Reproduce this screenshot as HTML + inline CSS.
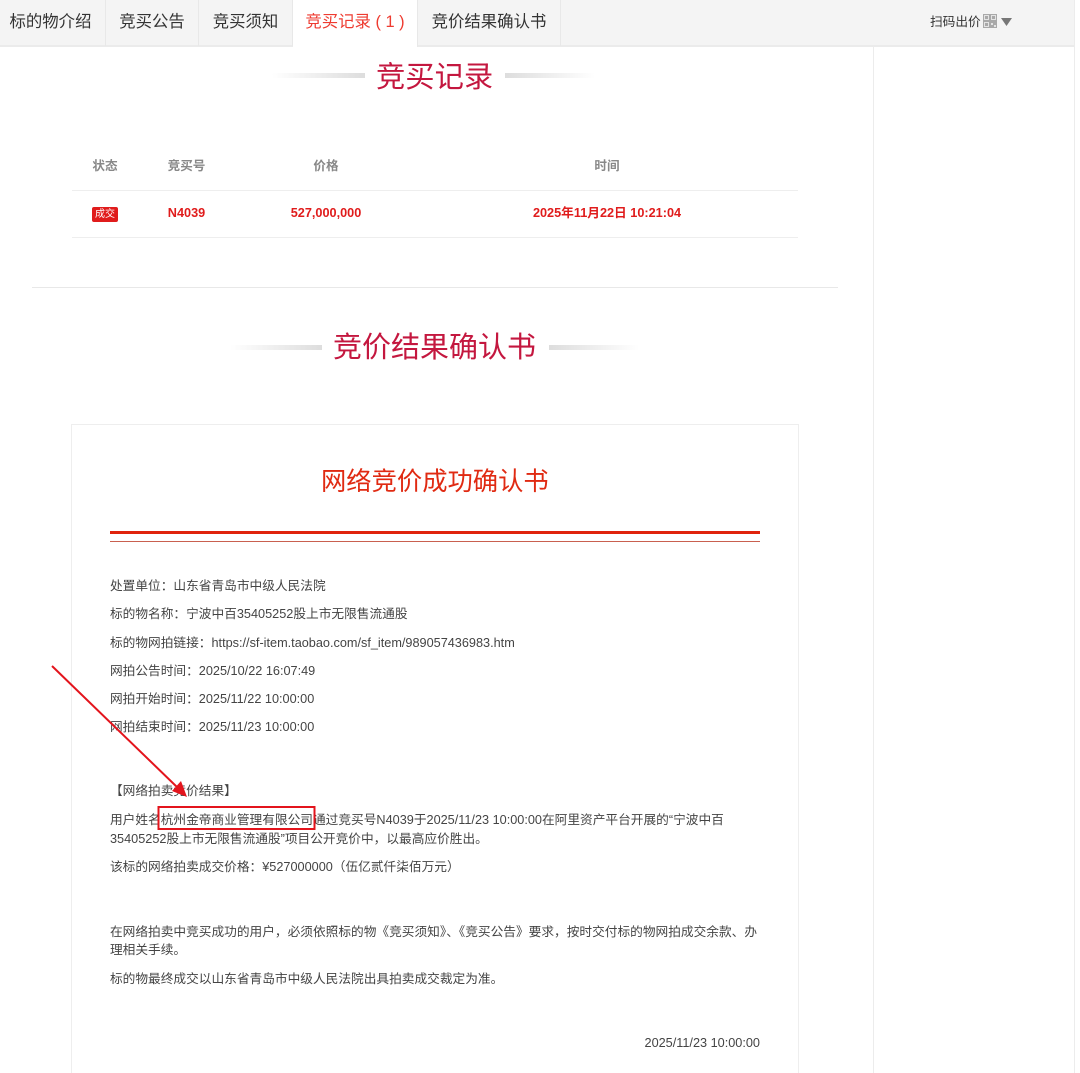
<!DOCTYPE html>
<html lang="zh-CN"><head><meta charset="utf-8"><title>竞买记录</title>
<style>
html,body{margin:0;padding:0;background:#fff;width:1080px;height:1073px;overflow:hidden}
#w{position:relative;width:1080px;height:1073px;overflow:hidden;font-family:"Liberation Sans","WenQuanYi Zen Hei","Noto Sans CJK SC",sans-serif}
.a{position:absolute;white-space:nowrap}
.r{position:absolute}
.tab{position:absolute;top:0;height:46px;line-height:45px;font-size:16.400px;color:#333;text-align:center;border-right:1px solid #e8e8e8;box-sizing:border-box}
.h{color:#c4173f;font-weight:400;line-height:40px}
.th{top:158px;font-size:12.600px;font-weight:700;color:#888;line-height:16px;transform:translateX(-50%)}
.td{top:205px;font-size:12.700px;font-weight:700;color:#e01c1c;line-height:16px;transform:translateX(-50%)}
.p{left:110px;font-size:12.700px;line-height:18px;color:#444}
</style></head><body><div id="w">
<div class="r" style="left:0;top:0;width:1075px;height:45px;background:#f4f4f4;border-bottom:2px solid #ebebeb"></div>
<div class="tab" style="left:0;width:106px;text-indent:-4px">标的物介绍</div>
<div class="tab" style="left:106px;width:93px">竞买公告</div>
<div class="tab" style="left:199px;width:94px">竞买须知</div>
<div class="tab" style="left:293px;width:125px;height:47px;background:#fff;color:#ee3b30">竞买记录 ( 1 )</div>
<div class="tab" style="left:418px;width:143px">竞价结果确认书</div>
<div class="a" style="left:930px;top:14px;font-size:12.700px;line-height:16px;color:#333">扫码出价</div>
<svg class="r" style="left:982px;top:14px" width="32" height="16" viewBox="0 0 32 16"><rect x="1" width="14" height="14" fill="#a9a9a9"/><path d="M2.500 1.500h4v4h-4zM9.500 1.500h4v4h-4zM2.500 8.500h4v4h-4z" fill="none" stroke="#e4e4e4" stroke-width="1"/><path d="M9 9h2v2H9zM12 11h2v2h-2z" fill="#e4e4e4"/><path d="M19 4h11l-5.500 8z" fill="#777"/></svg>
<div class="r" style="left:873px;top:47px;width:1px;height:1026px;background:#ececec"></div>
<div class="r" style="left:1074px;top:0;width:1px;height:1073px;background:#ececec"></div>

<div class="r" style="left:272px;top:73px;width:93px;height:5px;background:linear-gradient(90deg,#fff,#ddd)"></div>
<div class="a h" style="left:376px;top:58px;font-size:29.300px">竞买记录</div>
<div class="r" style="left:505px;top:73px;width:90px;height:5px;background:linear-gradient(90deg,#ddd,#fff)"></div>

<div class="a th" style="left:105px">状态</div>
<div class="a th" style="left:186.500px">竞买号</div>
<div class="a th" style="left:326px">价格</div>
<div class="a th" style="left:607px">时间</div>
<div class="r" style="left:72px;top:190px;width:726px;height:1px;background:#eee"></div>
<div class="r" style="left:92px;top:207px;width:26px;height:15px;background:#e01c1c;border-radius:2px"></div>
<div class="a" style="left:92px;top:207px;width:26px;text-align:center;font-size:10px;line-height:15px;color:#fff">成交</div>
<div class="a td" style="left:186.500px">N4039</div>
<div class="a td" style="left:326px">527,000,000</div>
<div class="a td" style="left:607px">2025年11月22日 10:21:04</div>
<div class="r" style="left:72px;top:237px;width:726px;height:1px;background:#eee"></div>
<div class="r" style="left:32px;top:287px;width:806px;height:1px;background:#e8e8e8"></div>

<div class="r" style="left:230px;top:345px;width:92px;height:5px;background:linear-gradient(90deg,#fff,#ddd)"></div>
<div class="a h" style="left:333px;top:328px;font-size:29px">竞价结果确认书</div>
<div class="r" style="left:549px;top:345px;width:90px;height:5px;background:linear-gradient(90deg,#ddd,#fff)"></div>

<div class="r" style="left:71px;top:424px;width:728px;height:700px;box-sizing:border-box;border:1px solid #eee"></div>
<div class="a" style="left:321px;top:464px;font-size:25.300px;line-height:36px;color:#e02a12">网络竞价成功确认书</div>
<div class="r" style="left:110px;top:531px;width:650px;height:3px;background:#e0230d"></div>
<div class="r" style="left:110px;top:541px;width:650px;height:1px;background:#c9604f"></div>

<div class="a p" style="top:577px">处置单位：山东省青岛市中级人民法院</div>
<div class="a p" style="top:605px">标的物名称：宁波中百35405252股上市无限售流通股</div>
<div class="a p" style="top:634px">标的物网拍链接：https://sf-item.taobao.com/sf_item/989057436983.htm</div>
<div class="a p" style="top:662px">网拍公告时间：2025/10/22 16:07:49</div>
<div class="a p" style="top:690px">网拍开始时间：2025/11/22 10:00:00</div>
<div class="a p" style="top:718px">网拍结束时间：2025/11/23 10:00:00</div>
<div class="a p" style="top:782px">【网络拍卖竞价结果】</div>
<div class="a p" style="top:811px">用户姓名杭州金帝商业管理有限公司通过竞买号N4039于2025/11/23 10:00:00在阿里资产平台开展的“宁波中百</div>
<div class="a p" style="top:830px">35405252股上市无限售流通股”项目公开竞价中，以最高应价胜出。</div>
<div class="a p" style="top:858px">该标的网络拍卖成交价格：¥527000000（伍亿贰仟柒佰万元）</div>
<div class="a p" style="top:923px">在网络拍卖中竞买成功的用户，必须依照标的物《竞买须知》、《竞买公告》要求，按时交付标的物网拍成交余款、办</div>
<div class="a p" style="top:941px">理相关手续。</div>
<div class="a p" style="top:970px">标的物最终成交以山东省青岛市中级人民法院出具拍卖成交裁定为准。</div>
<div class="a p" style="left:auto;right:320px;top:1034px">2025/11/23 10:00:00</div>

<svg class="r" style="left:0;top:0;pointer-events:none" width="1080" height="1073" viewBox="0 0 1080 1073">
<rect x="158.500" y="807" width="156" height="22" fill="none" stroke="#e3141c" stroke-width="2"/>
<path d="M52 666L178 788" stroke="#e3141c" stroke-width="2" fill="none"/>
<path d="M187 797L172 791L181 781z" fill="#e3141c"/>
</svg>
</div></body></html>
